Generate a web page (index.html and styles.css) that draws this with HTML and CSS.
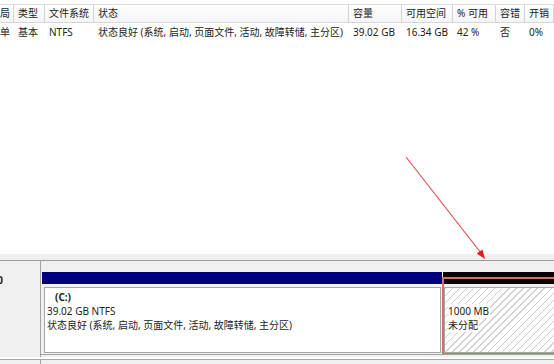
FILE: index.html
```html
<!DOCTYPE html>
<html lang="zh-CN">
<head>
<meta charset="utf-8">
<link rel="stylesheet" href="styles.css">
</head>
<body>
<div class="page">
  <div class="list">
    <div class="grid header">
      <div class="cell first">局</div>
      <div class="cell">类型</div>
      <div class="cell">文件系统</div>
      <div class="cell">状态</div>
      <div class="cell">容量</div>
      <div class="cell">可用空间</div>
      <div class="cell">% 可用</div>
      <div class="cell">容错</div>
      <div class="cell">开销</div>
    </div>
    <div class="grid row">
      <div class="cell first">单</div>
      <div class="cell">基本</div>
      <div class="cell">NTFS</div>
      <div class="cell">状态良好 (系统, 启动, 页面文件, 活动, 故障转储, 主分区)</div>
      <div class="cell">39.02 GB</div>
      <div class="cell">16.34 GB</div>
      <div class="cell">42 %</div>
      <div class="cell">否</div>
      <div class="cell">0%</div>
    </div>
  </div>
  <div class="divider"></div>
  <div class="disk">
    <div class="label"><span class="disk-name">0</span></div>
    <div class="parts">
      <div class="part part-c">
        <div class="bar bar-primary"></div>
        <div class="body">
          <div class="box">
            <div class="line vol">(C:)</div>
            <div class="line">39.02 GB NTFS</div>
            <div class="line">状态良好 (系统, 启动, 页面文件, 活动, 故障转储, 主分区)</div>
          </div>
        </div>
      </div>
      <div class="part part-free">
        <div class="bar bar-free"><div class="bar-red"></div></div>
        <div class="body">
          <div class="box hatch">
            <div class="line"></div>
            <div class="line"><span class="txt">1000 MB</span></div>
            <div class="line"><span class="txt">未分配</span></div>
          </div>
        </div>
      </div>
    </div>
  </div>
  <div class="disk next">
    <div class="label"></div>
    <div class="parts"></div>
  </div>
</div>
<svg class="arrow" width="554" height="364" viewBox="0 0 554 364">
  <line x1="406" y1="157" x2="481" y2="253" stroke="#e04a4a" stroke-width="1.1"/>
  <polygon points="485,259 476.7,253.6 482.5,249.4" fill="#e02020"/>
</svg>
</body>
</html>
```

FILE: styles.css
```css
* { box-sizing: border-box; }

body {
  margin: 0;
  width: 554px;
  height: 364px;
  overflow: hidden;
  position: relative;
  background: #fff;
  font-family: "Noto Sans", "Noto Sans CJK SC", sans-serif;
  font-size: 10px;
  color: #222;
}

.page {
  display: flex;
  flex-direction: column;
  height: 364px;
  overflow: hidden;
}

.list {
  height: 254px;
  flex: none;
  background: #fff;
  padding-top: 4px;
  overflow: hidden;
}

.grid {
  display: grid;
  grid-template-columns: 14px 31px 49px 255px 53px 51px 43px 29px 29px;
  white-space: nowrap;
}

.header {
  height: 19px;
  border-top: 1px solid #dcdcdc;
  border-bottom: 1px solid #d6d6d6;
  background: linear-gradient(#ffffff, #f4f5f7);
}

.header .cell {
  line-height: 17px;
  padding-left: 4px;
  border-right: 1px solid #d4d4d4;
  overflow: hidden;
}

.row .cell {
  line-height: 18px;
  padding-left: 4px;
  overflow: hidden;
}

.grid .first {
  padding-left: 0;
}

.divider {
  height: 7px;
  flex: none;
  background: #f0f0f0;
  border-bottom: 1px solid #9c9c9c;
}

.disk {
  display: flex;
  height: 96px;
  flex: none;
  background: #f0f0f0;
}

.label {
  width: 41px;
  flex: none;
  background: #f0f0f0;
  border-right: 1px solid #a4a4a4;
  padding-top: 12px;
  overflow: hidden;
  white-space: nowrap;
}

.disk-name {
  display: inline-block;
  width: 3px;
  overflow: hidden;
  direction: rtl;
  font-weight: bold;
  line-height: 14px;
}

.parts {
  flex: 1;
  display: flex;
  padding-top: 11px;
  padding-left: 1px;
  border-bottom: 1px solid #a4a4a4;
  overflow: hidden;
  height: 94px;
}

.part {
  display: flex;
  flex-direction: column;
  flex: none;
}

.part-c { width: 400px; }

.part-free {
  width: 130px;
  position: relative;
}

.bar {
  height: 12px;
  flex: none;
}

.bar-primary { background: #00007e; }

.bar-free {
  background: #050000;
  padding-top: 5px;
  margin-left: 1px;
}

.bar-red {
  height: 1px;
  background: #b03a3a;
}

.body {
  flex: 1;
  padding: 3px 1px 1px 2px;
  display: flex;
}

.box {
  flex: 1;
  border: 1px solid #a6a6a6;
  background: #fff;
  padding: 2px 0 0 2px;
}

.line {
  line-height: 14px;
  height: 14px;
  white-space: nowrap;
}

.vol {
  font-weight: bold;
  padding-left: 8px;
}

.hatch {
  background-color: #fff;
  background-image: repeating-linear-gradient(135deg, #cfcfcf 0, #cfcfcf 1px, #ffffff 1px, #ffffff 5px);
  padding-left: 3px;
}

.txt {
  background: #fff;
  padding-right: 1px;
}

.part-free::after {
  content: "";
  position: absolute;
  left: 0;
  top: 5px;
  right: -3px;
  bottom: -1px;
  border: 2px solid #d27070;
  pointer-events: none;
}

.next {
  border-top: 1px solid #a8a8a8;
  margin-top: 2px;
  flex: 1;
  height: auto;
  min-height: 0;
}

.next .label { padding-top: 0; }

.next .parts {
  border-bottom: none;
  height: auto;
}

.arrow {
  position: absolute;
  left: 0;
  top: 0;
  pointer-events: none;
}
```
